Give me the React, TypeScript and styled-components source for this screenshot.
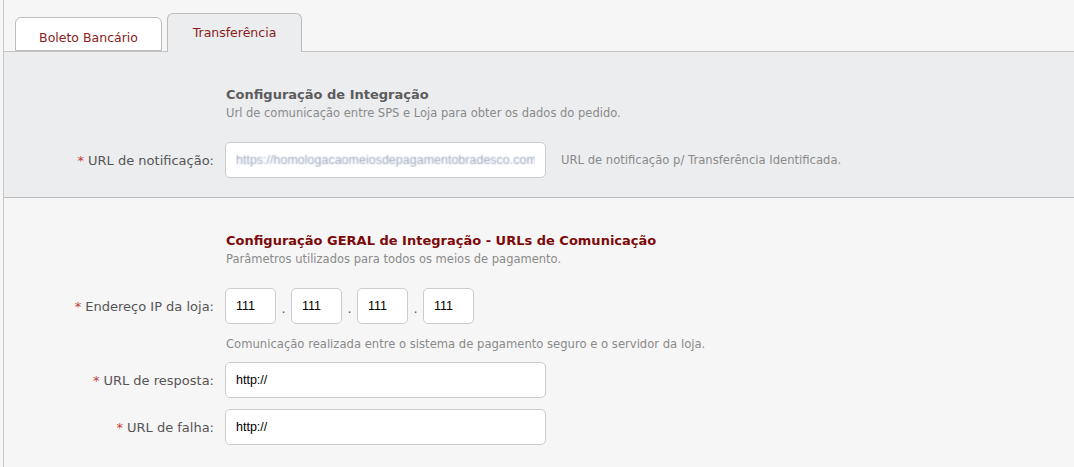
import styled, { createGlobalStyle } from "styled-components";

const GlobalStyle = createGlobalStyle`
  body {
    margin: 0;
    background: #f6f6f6;
    font-family: "DejaVu Sans", Tahoma, sans-serif;
  }
`;

const Page = styled.div`
  margin-left: 3px;
  border-left: 1px solid #c8c8c8;
  min-height: 467px;
  box-sizing: border-box;
`;

const TabBar = styled.div`
  display: flex;
  align-items: flex-end;
  gap: 5px;
  height: 51px;
  padding-left: 11px;
  border-bottom: 1px solid #c4c4c4;
`;

const Tab = styled.div<{ $active?: boolean }>`
  box-sizing: border-box;
  display: flex;
  align-items: center;
  justify-content: center;
  height: ${(p) => (p.$active ? "39px" : "34px")};
  margin-bottom: ${(p) => (p.$active ? "-1px" : "0")};
  padding: ${(p) => (p.$active ? "0 0 1px" : "6px 0 0")};
  width: ${(p) => (p.$active ? "135px" : "147px")};
  background: ${(p) => (p.$active ? "#ecedef" : "#ffffff")};
  border: 1px solid #bcbcbc;
  border-bottom: ${(p) => (p.$active ? "none" : "1px solid #bcbcbc")};
  border-radius: 6px 6px 0 0;
  color: #8a1c1c;
  font-size: 12.5px;
`;

const Panel = styled.section<{ $shade?: boolean }>`
  background: ${(p) => (p.$shade ? "#ecedef" : "#f6f6f6")};
  border-bottom: ${(p) => (p.$shade ? "1px solid #bdbdbd" : "none")};
  padding: ${(p) => (p.$shade ? "34px 0 19px" : "34px 0 20px")};
`;

const Header = styled.div`
  margin-left: 222px;
  margin-bottom: 20px;
`;

const Title = styled.h3<{ $accent?: boolean }>`
  margin: 0;
  font-size: 13px;
  line-height: 18px;
  font-weight: bold;
  color: ${(p) => (p.$accent ? "#7d0a0a" : "#5c5c5c")};
`;

const Subtitle = styled.p`
  margin: 0;
  font-size: 11.5px;
  line-height: 18px;
  color: #8a8a8a;
`;

const Row = styled.div<{ $gap?: number }>`
  display: flex;
  align-items: center;
  margin-top: ${(p) => p.$gap ?? 0}px;
`;

const Label = styled.label`
  width: 210px;
  padding-right: 11px;
  text-align: right;
  font-size: 13px;
  color: #555;
  flex-shrink: 0;
`;

const Required = styled.span`
  color: #c23b3b;
  margin-right: 4px;
`;

const TextInput = styled.input<{ $blurred?: boolean }>`
  box-sizing: border-box;
  width: 321px;
  height: 36px;
  padding: 0 10px;
  border: 1px solid #cccccc;
  border-radius: 5px;
  background: #fff;
  font-family: "Liberation Sans", Arial, sans-serif;
  font-size: 12.5px;
  color: ${(p) => (p.$blurred ? "transparent" : "#000")};
  text-shadow: ${(p) => (p.$blurred ? "0 0 1.5px #9aa6bd" : "none")};
  outline: none;
`;

const IpGroup = styled.div`
  display: flex;
  align-items: center;
`;

const IpInput = styled(TextInput)`
  width: 51px;
`;

const Dot = styled.span`
  width: 15px;
  text-align: center;
  font-size: 13px;
  color: #555;
  padding-top: 4px;
`;

const Hint = styled.span<{ $inline?: boolean }>`
  font-size: 11.6px;
  line-height: 18px;
  color: #8a8a8a;
  margin-left: ${(p) => (p.$inline ? "15px" : "222px")};
`;

const HintRow = styled.div`
  display: flex;
  margin-top: 11px;
`;

export default function App() {
  return (
    <>
      <GlobalStyle />
      <Page>
        <TabBar>
          <Tab>Boleto Bancário</Tab>
          <Tab $active>Transferência</Tab>
        </TabBar>

        <Panel $shade>
          <Header>
            <Title>Configuração de Integração</Title>
            <Subtitle>
              Url de comunicação entre SPS e Loja para obter os dados do pedido.
            </Subtitle>
          </Header>
          <Row>
            <Label>
              <Required>*</Required>URL de notificação:
            </Label>
            <TextInput
              $blurred
              readOnly
              value="https://homologacaomeiosdepagamentobradesco.com.br"
            />
            <Hint $inline>URL de notificação p/ Transferência Identificada.</Hint>
          </Row>
        </Panel>

        <Panel>
          <Header>
            <Title $accent>
              Configuração GERAL de Integração - URLs de Comunicação
            </Title>
            <Subtitle>Parâmetros utilizados para todos os meios de pagamento.</Subtitle>
          </Header>
          <Row>
            <Label>
              <Required>*</Required>Endereço IP da loja:
            </Label>
            <IpGroup>
              <IpInput readOnly value="111" />
              <Dot>.</Dot>
              <IpInput readOnly value="111" />
              <Dot>.</Dot>
              <IpInput readOnly value="111" />
              <Dot>.</Dot>
              <IpInput readOnly value="111" />
            </IpGroup>
          </Row>
          <HintRow>
            <Hint>
              Comunicação realizada entre o sistema de pagamento seguro e o servidor da loja.
            </Hint>
          </HintRow>
          <Row $gap={9}>
            <Label>
              <Required>*</Required>URL de resposta:
            </Label>
            <TextInput readOnly value="http://" />
          </Row>
          <Row $gap={11}>
            <Label>
              <Required>*</Required>URL de falha:
            </Label>
            <TextInput readOnly value="http://" />
          </Row>
        </Panel>
      </Page>
    </>
  );
}
